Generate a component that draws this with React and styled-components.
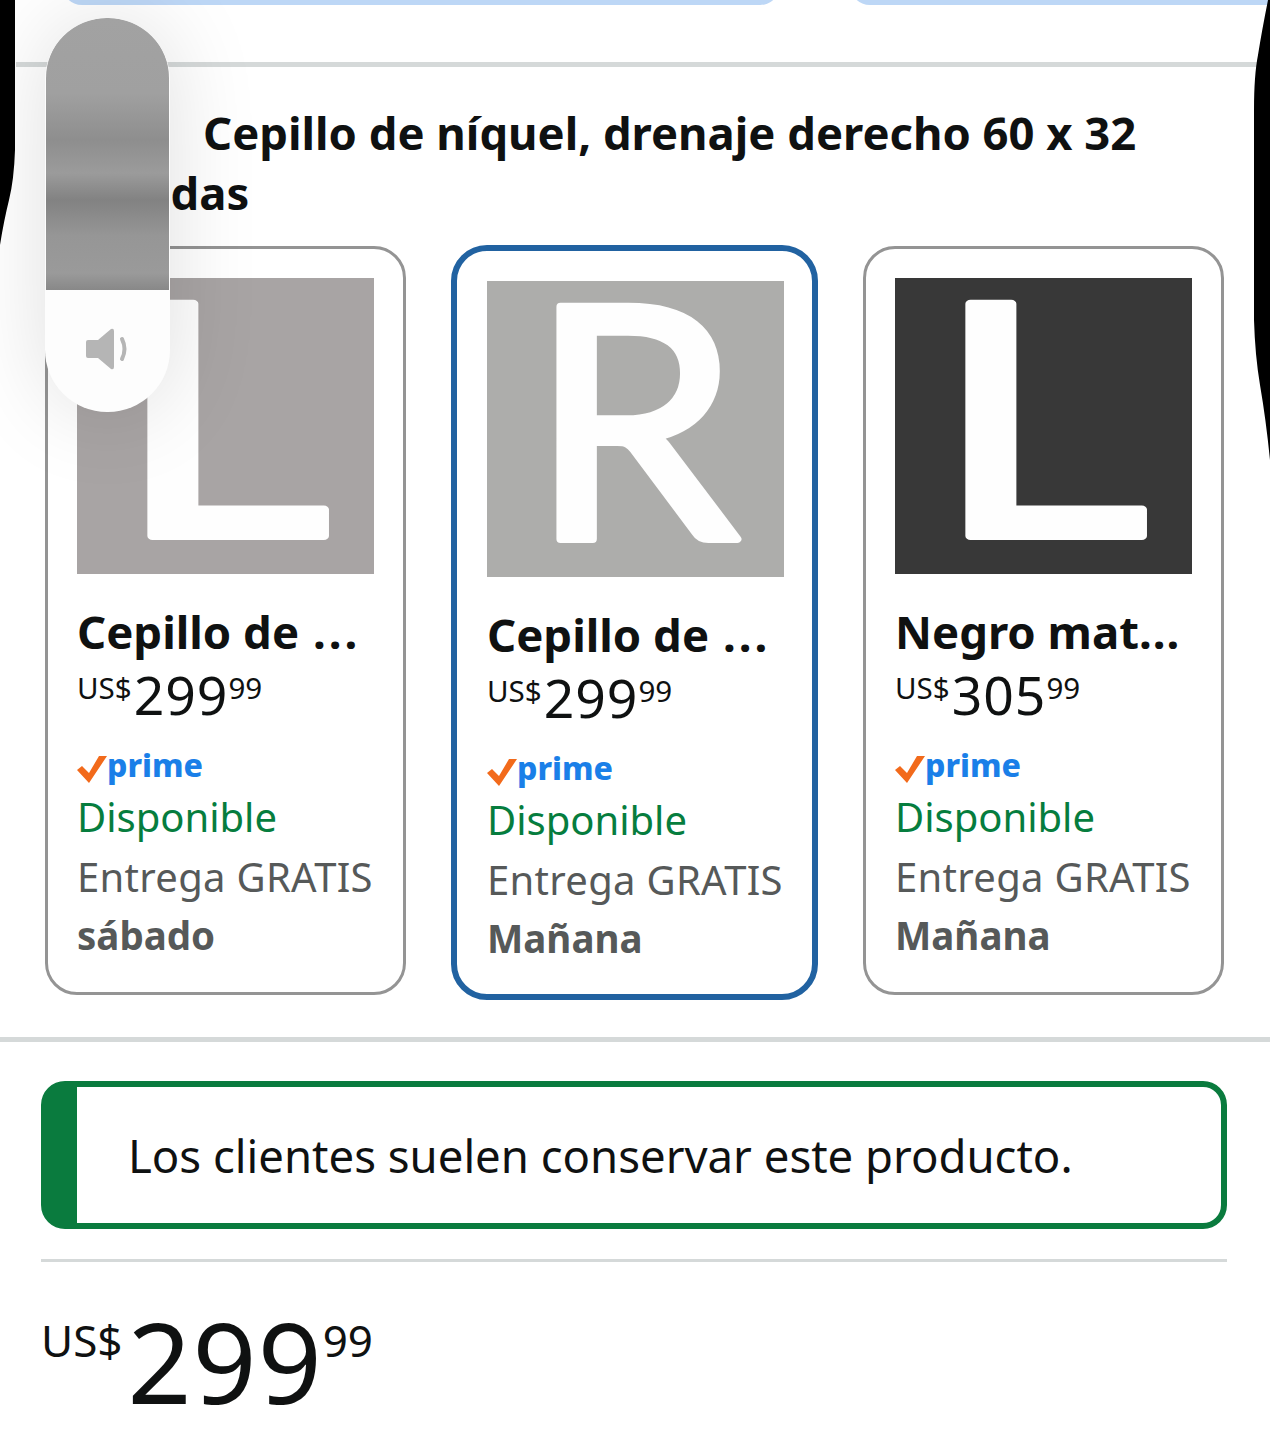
import React from "react";
import styled, { createGlobalStyle } from "styled-components";

const Global = createGlobalStyle`
  html, body { margin: 0; padding: 0; background: #fff; }
  * { box-sizing: border-box; }
`;

const Page = styled.div`
  position: relative;
  width: 1270px;
  height: 1440px;
  overflow: hidden;
  background: #fff;
  color: #0f1111;
  font-family: "Noto Sans", "Open Sans", sans-serif;
`;

const TopButtons = styled.div`
  display: flex;
  gap: 70px;
  height: 5px;
  padding-left: 62px;
  overflow: hidden;
`;

const TopButton = styled.div`
  flex: none;
  width: ${(p) => p.$width}px;
  height: 40px;
  margin-top: -35px;
  background: #bdd7f6;
  border-radius: 24px;
`;

const TopRule = styled.div`
  height: 5px;
  margin: 57px 0 0 16px;
  background: #d5d9d9;
`;

const Title = styled.h2`
  margin: 35px 60px 0 43px;
  font-size: 45.4px;
  line-height: 60px;
  font-weight: 700;
  text-indent: 160px;
`;

const Cards = styled.div`
  display: flex;
  align-items: flex-start;
  gap: 45px;
  margin: 24px 0 0 45px;
`;

const Card = styled.div`
  width: ${(p) => (p.$selected ? 367 : 361)}px;
  height: ${(p) => (p.$selected ? 755 : 749)}px;
  margin-top: ${(p) => (p.$selected ? -1 : 0)}px;
  padding: ${(p) => (p.$selected ? 30 : 29)}px;
  border: ${(p) => (p.$selected ? "6px solid #2162a1" : "3px solid #949494")};
  border-radius: ${(p) => (p.$selected ? 36 : 32)}px;
  background: #fff;
`;

const Swatch = styled.svg`
  display: block;
  width: 297px;
  height: 296px;
  overflow: visible;
  background: ${(p) => p.$bg};
`;

const SwatchLetter = styled.text`
  fill: #fefefe;
  stroke: #fefefe;
  stroke-linejoin: round;
  font-family: Lato, sans-serif;
  font-size: 324px;
  font-weight: 400;
`;

const Name = styled.div`
  margin-top: 27px;
  font-size: 45.5px;
  line-height: 60px;
  font-weight: 700;
  white-space: nowrap;
`;

const Dots = styled.span`
  margin-left: ${(p) => p.$gap}px;
  letter-spacing: ${(p) => p.$spacing}px;
`;

const Price = styled.div`
  display: flex;
  align-items: flex-start;
  margin-top: ${(p) => (p.$big ? 34 : 1)}px;
  line-height: 1;
`;

const Small = styled.span`
  margin-top: ${(p) => (p.$big ? 12 : 6)}px;
  font-size: ${(p) => (p.$big ? 44 : 29.5)}px;
  line-height: ${(p) => (p.$big ? 64 : 40)}px;
`;

const Whole = styled.span`
  margin-left: ${(p) => (p.$big ? 5 : 2)}px;
  font-size: ${(p) => (p.$big ? 112 : 53.5)}px;
  line-height: ${(p) => (p.$big ? 130 : 66)}px;
  letter-spacing: 1px;
`;

const PrimeRow = styled.div`
  display: flex;
  align-items: center;
  height: 44px;
  margin-top: 15px;
`;

const PrimeCheck = styled.svg`
  flex: none;
  margin-top: 8px;
`;

const PrimeText = styled.span`
  color: #1a7fe8;
  font-size: 32px;
  font-weight: 800;
  line-height: 44px;
`;

const Stock = styled.div`
  font-size: 40px;
  line-height: 60px;
  color: #067d3e;
  white-space: nowrap;
`;

const Delivery = styled.div`
  font-size: ${(p) => (p.$bold ? 38.5 : 40)}px;
  line-height: 59px;
  letter-spacing: ${(p) => (p.$bold ? 0 : 0.3)}px;
  color: #565959;
  font-weight: ${(p) => (p.$bold ? 700 : 400)};
  white-space: nowrap;
`;

const FullRule = styled.div`
  height: 5px;
  margin-top: 37px;
  background: #d5d9d9;
`;

const Section = styled.div`
  padding: 39px 43px 0 41px;
`;

const Notice = styled.div`
  display: flex;
  align-items: center;
  height: 148px;
  padding-left: 51px;
  border: 6px solid #0a7b3e;
  border-left-width: 36px;
  border-radius: 24px;
  font-size: 45.5px;
`;

const ThinRule = styled.div`
  height: 3px;
  margin-top: 30px;
  background: #d5d9d9;
`;

const Volume = styled.div`
  position: absolute;
  left: 45px;
  top: 18px;
  width: 125px;
  height: 394px;
  border-radius: 62px;
  background: #fdfdfd;
  box-shadow: 0 0 90px rgba(0, 0, 0, 0.13);
  overflow: hidden;
`;

const VolumeLevel = styled.div`
  height: 272px;
  margin: 0 1px;
  border-radius: 60px 60px 0 0;
  background: linear-gradient(
    #a2a2a2 0,
    #a0a0a0 75px,
    #8e8e8e 122px,
    #9b9b9b 155px,
    #828282 182px,
    #969696 218px,
    #9a9a9a 255px,
    #888 272px
  );
`;

const VolumeIcon = styled.div`
  display: flex;
  justify-content: center;
  padding-top: 37px;
`;

const EdgeMask = styled.svg`
  position: absolute;
  top: 0;
  left: 0;
  pointer-events: none;
`;

const Check = () => (
  <PrimeCheck width="30" height="27" viewBox="0 0 30 27">
    <path d="M0 14 L5 10 L12 17 L22 0 H30 L12 27 Z" fill="#f26a1b" />
  </PrimeCheck>
);

const Speaker = () => (
  <svg width="46" height="44" viewBox="0 0 46 44">
    <path
      d="M3 13 H13 L26 2 Q29 1 29 4 V40 Q29 43 26 42 L13 31 H3 Q1 31 1 29 V15 Q1 13 3 13 Z"
      fill="#b5b5b5"
    />
    <path d="M37 12 Q42 22 37 32" fill="none" stroke="#b5b5b5" strokeWidth="4" strokeLinecap="round" />
  </svg>
);

const options = [
  { letter: "L", bg: "#a8a4a4", name: "Cepillo de", gap: 14, spacing: 3, whole: "299", when: "sábado", x: 37, sx: 1.3, sw: 8 },
  { letter: "R", bg: "#adadab", name: "Cepillo de", gap: 14, spacing: 3, whole: "299", when: "Mañana", x: 43, sx: 1.03, sw: 8, selected: true },
  { letter: "L", bg: "#383838", name: "Negro mat", gap: 0, spacing: 1, whole: "305", when: "Mañana", x: 37, sx: 1.3, sw: 8 },
];

export default function App() {
  return (
    <Page>
      <Global />
      <TopButtons>
        <TopButton $width={718} />
        <TopButton $width={460} />
      </TopButtons>
      <TopRule />
      <Title>Cepillo de níquel, drenaje derecho 60 x 32 pulgadas</Title>
      <Cards>
        {options.map((o, i) => (
          <Card key={i} $selected={o.selected}>
            <Swatch $bg={o.bg} viewBox="0 0 297 296">
              <SwatchLetter
                transform={`translate(${o.x} 258) scale(${o.sx} 1)`}
                strokeWidth={o.sw}
              >
                {o.letter}
              </SwatchLetter>
            </Swatch>
            <Name>
              {o.name}
              <Dots $gap={o.gap} $spacing={o.spacing}>...</Dots>
            </Name>
            <Price>
              <Small>US$</Small>
              <Whole>{o.whole}</Whole>
              <Small>99</Small>
            </Price>
            <PrimeRow>
              <Check />
              <PrimeText>prime</PrimeText>
            </PrimeRow>
            <Stock>Disponible</Stock>
            <Delivery>Entrega GRATIS</Delivery>
            <Delivery $bold>{o.when}</Delivery>
          </Card>
        ))}
      </Cards>
      <FullRule />
      <Section>
        <Notice>Los clientes suelen conservar este producto.</Notice>
        <ThinRule />
        <Price $big>
          <Small $big>US$</Small>
          <Whole $big>299</Whole>
          <Small $big>99</Small>
        </Price>
      </Section>
      <Volume>
        <VolumeLevel />
        <VolumeIcon>
          <Speaker />
        </VolumeIcon>
      </Volume>
      <EdgeMask width="1270" height="1440" viewBox="0 0 1270 1440">
        <path d="M0 0 H15 V150 Q14 180 9 200 Q4 220 0 245 Z" fill="#000" />
        <path d="M1270 0 H1268 Q1262 30 1258 55 Q1254 75 1254 110 V320 Q1255 355 1260 385 Q1266 420 1270 460 Z" fill="#000" />
      </EdgeMask>
    </Page>
  );
}
